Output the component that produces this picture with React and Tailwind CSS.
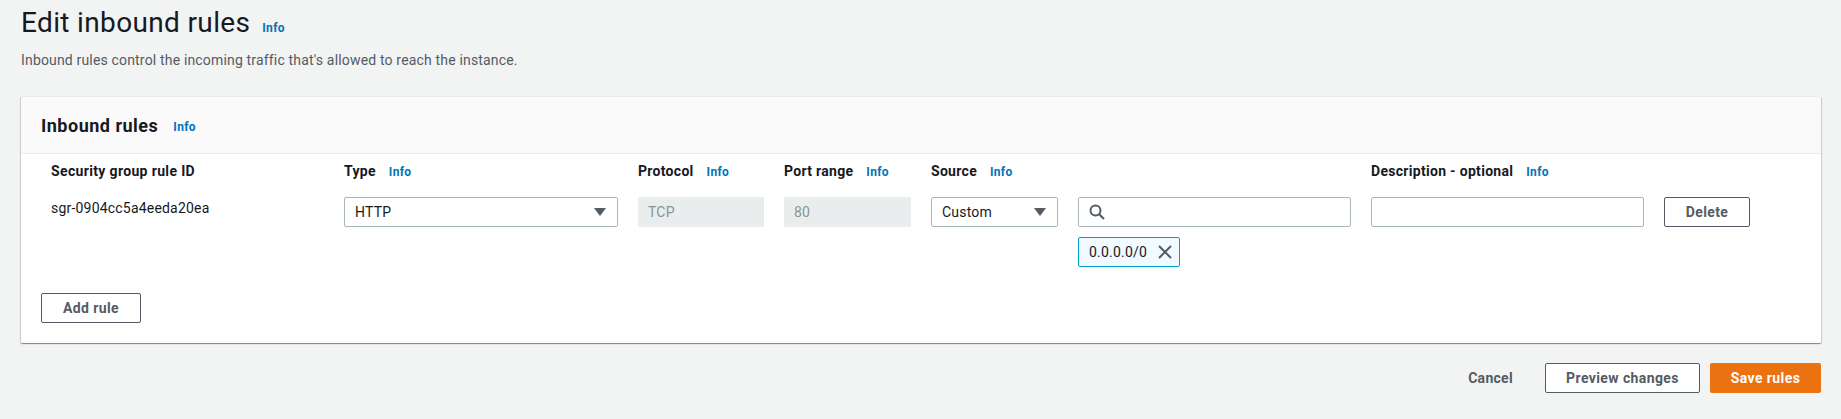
import React from "react";

const FONT = "font-['Roboto','Liberation_Sans',sans-serif]";

const InfoLink = ({ className = "" }) => (
  <a href="#" className={`text-[12px] font-bold tracking-[0.3px] text-[#0073bb] ${className}`}>
    Info
  </a>
);

const ColumnLabel = ({ text }) => (
  <div className="flex items-center gap-[13px] h-[22px]">
    <span className="text-[14px] font-bold tracking-[0.3px] text-[#16191f] whitespace-nowrap">{text}</span>
    <InfoLink className="mt-[1px]" />
  </div>
);

const Caret = () => (
  <svg width="14" height="10" viewBox="0 0 14 10" className="shrink-0">
    <path d="M1 1h12L7 9z" fill="#545b64" />
  </svg>
);

const SelectBox = ({ value }) => (
  <div className="h-[30px] flex items-center justify-between pl-[10px] pr-[10px] bg-white border border-[#aab7b8] rounded-[2px] text-[14px] tracking-[0.2px] text-[#16191f]">
    <span className="pt-[1px]">{value}</span>
    <Caret />
  </div>
);

const DisabledBox = ({ value }) => (
  <div className="h-[30px] flex items-center pl-[10px] pt-[1px] bg-[#eaeded] rounded-[2px] text-[14px] tracking-[0.2px] text-[#879596]">
    {value}
  </div>
);

const OutlineButton = ({ text, className = "" }) => (
  <button className={`h-[30px] pt-[1px] bg-white border border-[#545b64] rounded-[2px] text-[14px] font-bold tracking-[0.4px] text-[#545b64] ${className}`}>
    {text}
  </button>
);

export default function App() {
  return (
    <div className={`${FONT} min-h-[419px] bg-[#f2f3f3] pl-[21px] pr-[20px]`}>
      <div className="flex items-center h-[42px] pt-[3px]">
        <h1 className="text-[28px] leading-[42px] font-normal tracking-[0.35px] text-[#16191f]">Edit inbound rules</h1>
        <InfoLink className="ml-[12px] mt-[10px]" />
      </div>
      <p className="mt-[8px] text-[14px] leading-[20px] tracking-[0.17px] text-[#545b64]">
        Inbound rules control the incoming traffic that's allowed to reach the instance.
      </p>

      <div className="mt-[26px] bg-white border-t border-[#eaeded] rounded-[1px] shadow-[0_1px_1px_0_rgba(0,28,36,0.3),1px_1px_1px_0_rgba(0,28,36,0.15),-1px_1px_1px_0_rgba(0,28,36,0.15)]">
        <div className="h-[57px] flex items-center gap-[15px] pl-[20px] bg-[#fafafa] border-b border-[#eaeded]">
          <h2 className="text-[18px] font-bold tracking-[0.5px] text-[#16191f]">Inbound rules</h2>
          <InfoLink className="mt-[4px]" />
        </div>

        <div className="px-[20px] pb-[20px] pt-[6px]">
          <div className="grid grid-cols-[273px_274px_126px_127px_127px_273px_273px_86px] gap-x-[20px] pl-[10px]">
            <span className="h-[22px] flex items-center text-[14px] font-bold tracking-[0.35px] text-[#16191f]">Security group rule ID</span>
            <ColumnLabel text="Type" />
            <ColumnLabel text="Protocol" />
            <ColumnLabel text="Port range" />
            <ColumnLabel text="Source" />
            <span />
            <ColumnLabel text="Description - optional" />
            <span />

            <span className="mt-[15px] text-[14px] leading-[22px] tracking-[0.2px] text-[#16191f]">sgr-0904cc5a4eeda20ea</span>
            <div className="mt-[15px]"><SelectBox value="HTTP" /></div>
            <div className="mt-[15px]"><DisabledBox value="TCP" /></div>
            <div className="mt-[15px]"><DisabledBox value="80" /></div>
            <div className="mt-[15px]"><SelectBox value="Custom" /></div>
            <div className="mt-[15px]">
              <div className="h-[30px] flex items-center pl-[10px] bg-white border border-[#aab7b8] rounded-[2px]">
                <svg width="16" height="16" viewBox="0 0 16 16" fill="none" stroke="#545b64" strokeWidth="2">
                  <circle cx="6.5" cy="6.5" r="5" />
                  <path d="M10.2 10.2L15 15" />
                </svg>
              </div>
              <div className="mt-[10px] w-[102px] h-[30px] flex items-center justify-between pl-[10px] pr-[7px] bg-[#f1faff] border border-[#00a1c9] rounded-[2px] text-[14px] tracking-[0.2px] text-[#16191f]">
                <span className="pt-[1px]">0.0.0.0/0</span>
                <svg width="14" height="14" viewBox="0 0 14 14" fill="none" stroke="#545b64" strokeWidth="2">
                  <path d="M1 1l12 12M13 1L1 13" />
                </svg>
              </div>
            </div>
            <div className="mt-[15px] h-[30px] bg-white border border-[#aab7b8] rounded-[2px]" />
            <div className="mt-[15px]"><OutlineButton text="Delete" className="w-full" /></div>
          </div>

          <OutlineButton text="Add rule" className="mt-[26px] w-[100px]" />
        </div>
      </div>

      <div className="mt-[20px] flex items-center justify-end">
        <a href="#" className="text-[14px] font-bold tracking-[0.3px] text-[#545b64]">Cancel</a>
        <OutlineButton text="Preview changes" className="ml-[32px] w-[155px]" />
        <button className="ml-[10px] w-[111px] h-[30px] pt-[1px] bg-[#ec7211] rounded-[2px] text-[14px] font-bold tracking-[0.4px] text-white">
          Save rules
        </button>
      </div>
    </div>
  );
}
